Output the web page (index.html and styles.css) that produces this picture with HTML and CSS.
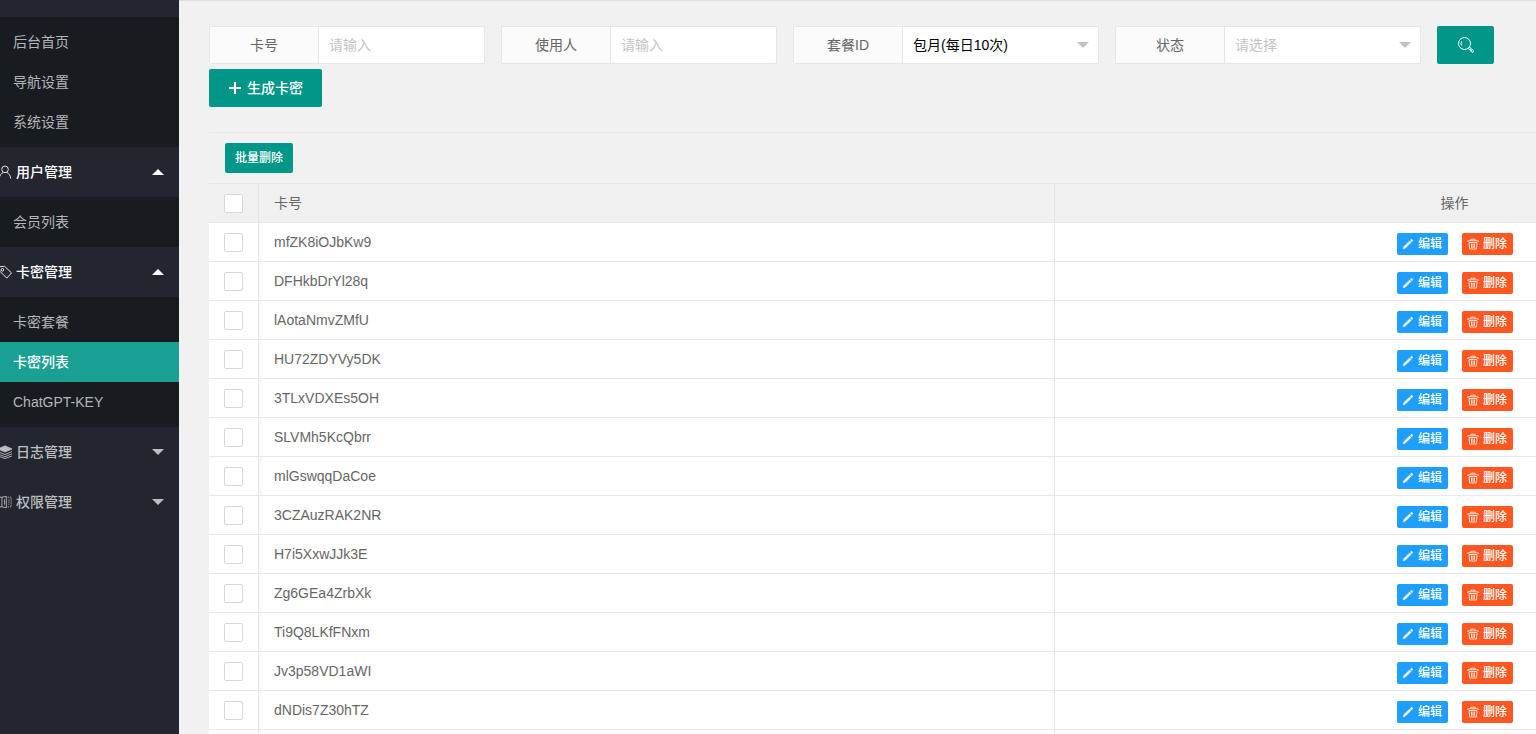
FILE: index.html
```
<!DOCTYPE html>
<html lang="zh-CN">
<head>
<meta charset="utf-8">
<title>卡密列表</title>
<link rel="stylesheet" href="styles.css">
</head>
<body>
<svg class="sprite" aria-hidden="true">
  <symbol id="i-edit" viewBox="0 0 12 12"><path d="M1 11l.9-2.400 5.700-5.700 1.500 1.500-5.700 5.700zM8.300 2.200l1.200-1.200 1.500 1.500-1.200 1.200z" fill="currentColor" stroke="currentColor" stroke-width=".4"/></symbol>
  <symbol id="i-trash" viewBox="0 0 12 12"><path d="M.8 4V2.800h10.400V4M3.800 2.600V1.200h4.400v1.400M2 4.500l.6 6.500h6.800l.6-6.500zM4.500 5.500v4.500M6 5.500v4.500M7.500 5.500v4.500" fill="none" stroke="currentColor" stroke-width=".8"/></symbol>
</svg>
<div class="layout">
  <nav class="side">
    <ul class="sub">
      <li><a href="#">后台首页</a></li>
      <li><a href="#">导航设置</a></li>
      <li><a href="#">系统设置</a></li>
    </ul>
    <a class="group open" href="#"><svg class="gicon" viewBox="0 0 16 16"><circle cx="8" cy="5" r="3.800"/><path d="M1.500 15.500c.2-3.500 1.900-5.800 4.500-7M14.500 15.500c-.2-3.500-1.900-5.800-4.500-7"/></svg>用户管理<span class="caret"></span></a>
    <ul class="sub">
      <li><a href="#">会员列表</a></li>
    </ul>
    <a class="group open" href="#"><svg class="gicon" viewBox="0 0 16 16"><path d="M1 2l6.500-.5 8 7.500-5.500 6-8-8z"/><circle cx="5" cy="5.500" r="1.500"/></svg>卡密管理<span class="caret"></span></a>
    <ul class="sub">
      <li><a href="#">卡密套餐</a></li>
      <li><a class="active" href="#">卡密列表</a></li>
      <li><a href="#">ChatGPT-KEY</a></li>
    </ul>
    <a class="group" href="#"><svg class="gicon" viewBox="0 0 16 16"><path d="M0 4.500l8-3.500 8 3.500-8 3.500z" fill="currentColor"/><path d="M0 7.500l8 3.500 8-3.500M0 10l8 3.500 8-3.500M0 12.500l8 3 8-3"/></svg>日志管理<span class="caret"></span></a>
    <a class="group" href="#"><svg class="gicon" viewBox="0 0 16 16"><path d="M1.500 2.500h3v11h-3M4.500 2.500l5-1v13l-5-1M7.500 5v6"/><path d="M11 2.500h4v11h-4M12.500 5v6" stroke-dasharray="1.500 1"/></svg>权限管理<span class="caret"></span></a>
  </nav>
  <main class="main">
    <form class="filters">
      <div class="field"><label for="card">卡号</label><input id="card" type="text" placeholder="请输入"></div>
      <div class="field"><label for="user">使用人</label><input id="user" type="text" placeholder="请输入"></div>
      <div class="field wide"><label for="plan">套餐ID</label><div class="pick"><select id="plan"><option>包月(每日10次)</option></select></div></div>
      <div class="field wide"><label for="state">状态</label><div class="pick"><select id="state" class="blank"><option>请选择</option></select></div></div>
      <button class="btn search" type="button" aria-label="搜索"><svg viewBox="0 0 18 18"><circle cx="7.500" cy="7.500" r="6"/><path d="M4.500 9.500q-1-2 0-4M11.600 12.600l1.200-1.200 3.600 3.200q.6 1.600-1.400 1.800zM13.200 13l1.800 1.800"/></svg></button>
      <button class="btn create" type="button"><svg viewBox="0 0 14 14"><path d="M7 1v12M1 7h12" stroke-width="2"/></svg>生成卡密</button>
    </form>
    <section class="list">
      <div class="toolbar"><button class="btn batch" type="button">批量删除</button></div>
      <table class="grid">
        <thead><tr><th class="c-check"><input type="checkbox" aria-label="全选"></th><th class="c-card">卡号</th><th></th><th class="c-act">操作</th></tr></thead>
        <tbody>
          <tr><td class="c-check"><input type="checkbox" aria-label="选择"></td><td>mfZK8iOJbKw9</td><td></td><td class="c-act"><div class="acts"><button class="op edit"><svg><use href="#i-edit"/></svg>编辑</button><button class="op del"><svg><use href="#i-trash"/></svg>删除</button></div></td></tr>
          <tr><td class="c-check"><input type="checkbox" aria-label="选择"></td><td>DFHkbDrYl28q</td><td></td><td class="c-act"><div class="acts"><button class="op edit"><svg><use href="#i-edit"/></svg>编辑</button><button class="op del"><svg><use href="#i-trash"/></svg>删除</button></div></td></tr>
          <tr><td class="c-check"><input type="checkbox" aria-label="选择"></td><td>lAotaNmvZMfU</td><td></td><td class="c-act"><div class="acts"><button class="op edit"><svg><use href="#i-edit"/></svg>编辑</button><button class="op del"><svg><use href="#i-trash"/></svg>删除</button></div></td></tr>
          <tr><td class="c-check"><input type="checkbox" aria-label="选择"></td><td>HU72ZDYVy5DK</td><td></td><td class="c-act"><div class="acts"><button class="op edit"><svg><use href="#i-edit"/></svg>编辑</button><button class="op del"><svg><use href="#i-trash"/></svg>删除</button></div></td></tr>
          <tr><td class="c-check"><input type="checkbox" aria-label="选择"></td><td>3TLxVDXEs5OH</td><td></td><td class="c-act"><div class="acts"><button class="op edit"><svg><use href="#i-edit"/></svg>编辑</button><button class="op del"><svg><use href="#i-trash"/></svg>删除</button></div></td></tr>
          <tr><td class="c-check"><input type="checkbox" aria-label="选择"></td><td>SLVMh5KcQbrr</td><td></td><td class="c-act"><div class="acts"><button class="op edit"><svg><use href="#i-edit"/></svg>编辑</button><button class="op del"><svg><use href="#i-trash"/></svg>删除</button></div></td></tr>
          <tr><td class="c-check"><input type="checkbox" aria-label="选择"></td><td>mlGswqqDaCoe</td><td></td><td class="c-act"><div class="acts"><button class="op edit"><svg><use href="#i-edit"/></svg>编辑</button><button class="op del"><svg><use href="#i-trash"/></svg>删除</button></div></td></tr>
          <tr><td class="c-check"><input type="checkbox" aria-label="选择"></td><td>3CZAuzRAK2NR</td><td></td><td class="c-act"><div class="acts"><button class="op edit"><svg><use href="#i-edit"/></svg>编辑</button><button class="op del"><svg><use href="#i-trash"/></svg>删除</button></div></td></tr>
          <tr><td class="c-check"><input type="checkbox" aria-label="选择"></td><td>H7i5XxwJJk3E</td><td></td><td class="c-act"><div class="acts"><button class="op edit"><svg><use href="#i-edit"/></svg>编辑</button><button class="op del"><svg><use href="#i-trash"/></svg>删除</button></div></td></tr>
          <tr><td class="c-check"><input type="checkbox" aria-label="选择"></td><td>Zg6GEa4ZrbXk</td><td></td><td class="c-act"><div class="acts"><button class="op edit"><svg><use href="#i-edit"/></svg>编辑</button><button class="op del"><svg><use href="#i-trash"/></svg>删除</button></div></td></tr>
          <tr><td class="c-check"><input type="checkbox" aria-label="选择"></td><td>Ti9Q8LKfFNxm</td><td></td><td class="c-act"><div class="acts"><button class="op edit"><svg><use href="#i-edit"/></svg>编辑</button><button class="op del"><svg><use href="#i-trash"/></svg>删除</button></div></td></tr>
          <tr><td class="c-check"><input type="checkbox" aria-label="选择"></td><td>Jv3p58VD1aWI</td><td></td><td class="c-act"><div class="acts"><button class="op edit"><svg><use href="#i-edit"/></svg>编辑</button><button class="op del"><svg><use href="#i-trash"/></svg>删除</button></div></td></tr>
          <tr><td class="c-check"><input type="checkbox" aria-label="选择"></td><td>dNDis7Z30hTZ</td><td></td><td class="c-act"><div class="acts"><button class="op edit"><svg><use href="#i-edit"/></svg>编辑</button><button class="op del"><svg><use href="#i-trash"/></svg>删除</button></div></td></tr>
          <tr><td class="c-check"></td><td></td><td></td><td class="c-act"></td></tr>
        </tbody>
      </table>
    </section>
  </main>
</div>
</body>
</html>
```
FILE: styles.css
```
* { box-sizing: border-box; }
body, button, input, select {
  font-family: "Liberation Sans", "Noto Sans CJK SC", sans-serif;
  font-size: 14px;
}
body { margin: 0; color: #666; background: #f1f1f1; }
.sprite { position: absolute; width: 0; height: 0; }
.layout { display: flex; height: 100vh; overflow: hidden; }

.side { flex: none; width: 179px; padding-top: 17px; background: #23262e; overflow: hidden; }
.sub { list-style: none; margin: 0; padding: 5px 0; background: #181b20; }
.sub a { display: block; padding-left: 13px; line-height: 40px; color: #b5b6b8; text-decoration: none; }
.sub a.active { background: #1aa194; color: #fff; font-weight: 500; }
.group {
  display: flex; align-items: center; height: 50px; padding-right: 15px;
  line-height: 50px; color: #bdbec0; text-decoration: none; font-weight: 500;
}
.group.open { color: #fff; }
.gicon {
  flex: none; width: 14px; height: 14px; margin: 0 4px 0 -2px;
  fill: none; stroke: currentColor; stroke-width: 1;
}
.caret {
  margin-left: auto;
  border: 6px solid transparent; border-top-color: currentColor; border-bottom: 0;
}
.open .caret { border-top: 0; border-bottom: 6px solid currentColor; }

.main { flex: 1; min-width: 0; padding: 25px 0 0 30px; border-top: 1px solid #ddd; }
.filters { display: flex; flex-wrap: wrap; gap: 5px 16px; }
.field { display: flex; width: 276px; height: 38px; border: 1px solid #e6e6e6; border-radius: 2px; background: #fff; }
.field.wide { width: 306px; }
.field label {
  flex: none; width: 109px; line-height: 36px; text-align: center;
  background: #fbfbfb; border-right: 1px solid #e6e6e6;
}
.field input, .field select {
  flex: 1; min-width: 0; width: 100%; height: 36px; padding: 0 10px;
  border: 0; outline: 0; background: transparent; color: #000; appearance: none;
}
.field input::placeholder { color: #c4c4c4; }
.field select.blank { color: #c4c4c4; }
.pick { position: relative; flex: 1; }
.pick::after {
  content: ""; position: absolute; right: 9px; top: 15px; pointer-events: none;
  border: 6px solid transparent; border-top-color: #c2c2c2; border-bottom: 0;
}
.btn {
  display: flex; align-items: center; justify-content: center; height: 38px;
  border: 0; border-radius: 2px; background: #009688; color: #fff; padding: 0;
  line-height: 38px; font-weight: 500;
}
.btn svg { fill: none; stroke: currentColor; }
.search { width: 57px; }
.search svg { width: 18px; height: 18px; }
.create { width: 113px; gap: 5px; }
.create svg { width: 14px; height: 14px; }

.list { margin-top: 25px; border-top: 1px solid #e6e6e6; }
.toolbar { padding: 10px 16px; }
.batch { width: 68px; height: 30px; line-height: 30px; font-size: 12px; }
.grid { width: 100%; table-layout: fixed; border-collapse: separate; border-spacing: 0; background: #fff; }
.grid th, .grid td { height: 39px; padding: 0 15px; border-bottom: 1px solid #e8e8e8; text-align: left; font-weight: 400; }
.grid th { height: 40px; line-height: 38px; border-top: 1px solid #e6e6e6; background: #f0f0f0; }
.grid .c-check { width: 50px; padding: 0 0 0 15px; border-right: 1px solid #e6e6e6; }
.c-card { width: 60%; }
.grid tr > :nth-child(2) { border-right: 1px solid #e6e6e6; }
.grid td:nth-child(2) { background: linear-gradient(to right, #f7f7f7, #fff 5px); }
.grid .c-act { width: 163px; padding: 0; text-align: center; }
.grid input { display: block; appearance: none; width: 19px; height: 19px; margin: 0; border: 1px solid #d8d8d8; border-radius: 2px; background: #fff; }
.acts { display: flex; justify-content: center; gap: 14px; padding-top: 3px; }
.op {
  display: flex; align-items: center; justify-content: center; gap: 4px;
  width: 51px; height: 22px; padding: 0; border: 0; border-radius: 2px;
  color: #fff; font-size: 12px; line-height: 22px; font-weight: 500;
}
.op svg { width: 12px; height: 12px; }
.edit { background: #1e9fff; }
.del { background: #ff5722; }
```
